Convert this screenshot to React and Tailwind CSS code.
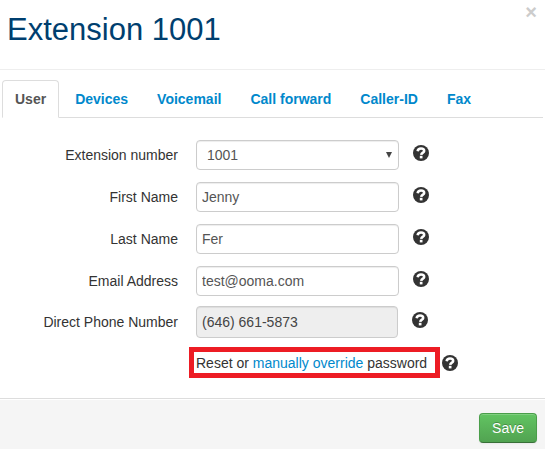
import React from "react";

function HelpIcon() {
  return (
    <svg viewBox="0 0 16 16" className="size-4" aria-hidden="true">
      <circle cx="8" cy="8" r="8" className="fill-[#333]" />
      <path
        d="M4.6 6.2C4.9 4.4 6.1 3.6 8 3.6C10 3.6 11.2 4.4 11.2 5.9C11.2 7.6 8.4 7.6 8.2 9.8"
        className="fill-none stroke-white stroke-[2.5]"
      />
      <path d="M6.8 10.8h2.7v2.6H6.8z" className="fill-white" />
    </svg>
  );
}

function HelpButton({ topic }) {
  return (
    <button type="button" aria-label={`Help: ${topic}`} className="shrink-0 cursor-pointer pb-1">
      <HelpIcon />
    </button>
  );
}

const tabs = ["User", "Devices", "Voicemail", "Call forward", "Caller-ID", "Fax"];

const fieldClass =
  "h-[30px] w-[203px] rounded border border-[#ccc] bg-white px-[5px] text-[#555] shadow-[inset_0_1px_1px_rgba(0,0,0,0.075)]";

function Row({ id, label, children }) {
  return (
    <div className="flex items-center">
      <label htmlFor={id} className="mr-[18px] w-[178px] text-right">
        {label}
      </label>
      {children}
      <span className="ml-[14px] flex">
        <HelpButton topic={label} />
      </span>
    </div>
  );
}

export default function App() {
  return (
    <div className="min-h-screen bg-white font-['Liberation_Sans',Arial,sans-serif] text-[14px] leading-5 text-[#333]">
      <header className="flex items-start justify-between border-b border-[#eee] pt-[10px] pr-2 pb-[19px] pl-[7px]">
        <h2 className="text-[31px] leading-10 text-[#003f6f]">Extension 1001</h2>
        <button
          type="button"
          aria-label="Close"
          className="-mt-2 cursor-pointer text-[20px] leading-5 font-bold text-[#ccc]"
        >
          ×
        </button>
      </header>

      <nav className="mx-[2px] mt-[10px] flex gap-[3px] border-b border-[#ddd]">
        {tabs.map((tab, i) => (
          <a
            key={tab}
            href="#"
            className={
              i === 0
                ? "-mb-px rounded-t border border-[#ddd] border-b-white bg-white px-3 py-2 font-bold text-[#555]"
                : "px-[13px] pt-[9px] pb-2 font-bold text-[#08c]"
            }
          >
            {tab}
          </a>
        ))}
      </nav>

      <form>
        <div className="flex flex-col gap-3 pt-[22px] pb-5">
          <Row id="extension" label="Extension number">
            <span className="relative flex">
              <select id="extension" className={`${fieldClass} appearance-none pl-[10px]`} defaultValue="1001">
                <option>1001</option>
              </select>
              <svg
                viewBox="0 0 6 6"
                className="pointer-events-none absolute top-3 right-[7px] size-[6px] fill-[#444]"
                aria-hidden="true"
              >
                <path d="M0 0h6L3 6z" />
              </svg>
            </span>
          </Row>
          <Row id="first" label="First Name">
            <input id="first" type="text" className={fieldClass} defaultValue="Jenny" />
          </Row>
          <Row id="last" label="Last Name">
            <input id="last" type="text" className={fieldClass} defaultValue="Fer" />
          </Row>
          <Row id="email" label="Email Address">
            <input id="email" type="email" className={fieldClass} defaultValue="test@ooma.com" />
          </Row>
          <div className="-mt-[2px]">
            <Row id="phone" label="Direct Phone Number">
              <input
                id="phone"
                type="tel"
                readOnly
                className="h-8 w-[202px] rounded border border-[#ccc] bg-[#eee] px-[5px] text-[#444] shadow-[inset_0_1px_1px_rgba(0,0,0,0.075)]"
                defaultValue="(646) 661-5873"
              />
            </Row>
          </div>
          <div className="-mt-[3px] flex items-center pl-[189px]">
            <p className="w-[251px] border-[5px] border-[#ed1c24] px-[2px] pt-px whitespace-nowrap">
              Reset or{" "}
              <a href="#" className="text-[#08c]">
                manually override
              </a>{" "}
              password
            </p>
            <span className="ml-[2px] flex pt-1">
              <HelpButton topic="Password" />
            </span>
          </div>
        </div>

        <footer className="flex justify-end border-t border-[#ddd] bg-[#f5f5f5] px-2 pt-[14px] pb-[6px] shadow-[inset_0_1px_0_#fff]">
          <button
            type="submit"
            className="cursor-pointer rounded border border-[#4a9e4a] border-b-[#387038] bg-linear-to-b from-[#62c462] to-[#51a351] px-3 py-1 text-white shadow-[inset_0_1px_0_rgba(255,255,255,0.2),0_1px_2px_rgba(0,0,0,0.05)] [text-shadow:0_-1px_0_rgba(0,0,0,0.25)]"
          >
            Save
          </button>
        </footer>
      </form>
    </div>
  );
}
